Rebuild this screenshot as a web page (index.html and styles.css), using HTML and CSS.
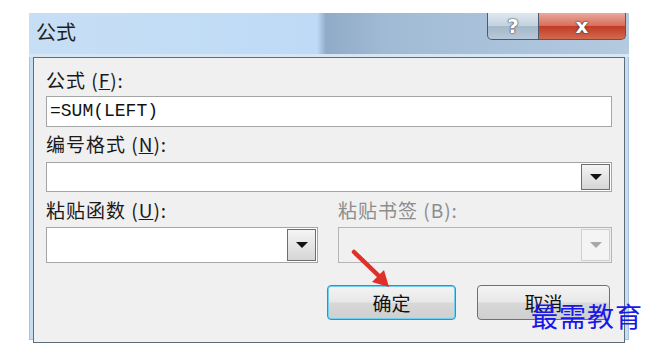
FILE: index.html
```html
<!DOCTYPE html>
<html lang="zh-CN">
<head>
    <meta charset="UTF-8">
    <title>公式</title>
    <link rel="stylesheet" href="styles.css">
</head>
<body>

    <div class="dialog">
        <div class="title-bar">
            <span class="title">公式</span>
            <div class="caption-buttons">
                <button class="btn-help">?</button>
                <button class="btn-close">x</button>
            </div>
        </div>

        <div class="panel">
            <label class="field-label">公式 (<u>F</u>):</label>
            <div class="text-box">=SUM(LEFT)</div>

            <label class="field-label">编号格式 (<u>N</u>):</label>
            <div class="combo">
                <div class="combo-value"></div>
                <div class="combo-arrow"><span class="tri"></span></div>
            </div>

            <div class="paste-row">
                <div class="paste-col">
                    <label class="field-label">粘贴函数 (<u>U</u>):</label>
                    <div class="combo tall">
                        <div class="combo-value"></div>
                        <div class="combo-arrow"><span class="tri"></span></div>
                    </div>
                </div>
                <div class="paste-col">
                    <label class="field-label disabled">粘贴书签 (B):</label>
                    <div class="combo tall off">
                        <div class="combo-value"></div>
                        <div class="combo-arrow"><span class="tri"></span></div>
                    </div>
                </div>
            </div>

            <div class="actions">
                <button class="btn btn-ok">确定</button>
                <button class="btn">取消</button>
            </div>
        </div>

        <svg class="arrow" width="50" height="44" viewBox="0 0 50 44">
            <path d="M3 3 L29 28" stroke="#e0302a" stroke-width="4.5" stroke-linecap="round" fill="none"/>
            <path d="M38 38 L21 33 L33 21 Z" fill="#e0302a"/>
        </svg>
    </div>

    <div class="watermark">最需教育</div>

</body>
</html>
```

FILE: styles.css
```css
body {
    margin: 0;
    background: #fff;
    font-family: "Noto Sans CJK SC", sans-serif;
    width: 654px;
    height: 350px;
    overflow: hidden;
    position: relative;
}
.dialog {
    position: relative;
    margin: 13px 0 0 29px;
    width: 600px;
    height: 327px;
    background: #c8ddf1;
    box-shadow: inset 0 0 0 1px #a9c3dc;
}
.title-bar {
    height: 44px;
    display: flex;
    justify-content: space-between;
    background: linear-gradient(to right, #c7dff5 0%, #bedaf6 48%, #90abc8 49.5%, #a2bbd5 60%, #b3cae0 100%);
    box-shadow: inset 0 -3px 0 #d6e6f4;
}
.title {
    font-size: 20px;
    color: #1e1e1e;
    padding: 7px 0 0 7px;
    line-height: 24px;
}
.caption-buttons {
    display: flex;
    margin-right: 3px;
    height: 27px;
}
.caption-buttons button {
    margin: 0;
    padding: 0;
    border: 1px solid #4d5c6c;
    border-top: none;
    font-family: "DejaVu Sans", sans-serif;
    font-weight: bold;
    font-size: 20px;
    line-height: 22px;
    color: #fff;
    text-shadow: 0 0 2px #333, 0 0 1px #333;
}
.btn-help {
    width: 52px;
    border-radius: 0 0 0 5px;
    background: linear-gradient(#dfe8f0, #c3d2df 50%, #a6b9ca 52%, #b7c9d8);
}
.btn-close {
    width: 87px;
    border-left: none !important;
    border-radius: 0 0 5px 0;
    background: linear-gradient(#e9a99b, #d8705c 48%, #c33b27 52%, #d26a4e);
}
.panel {
    margin: 0 4px;
    height: 277px;
    border: 1px solid #5e6d7c;
    background: #f0f0f0;
    padding: 7px 12px 0 12px;
}
.field-label {
    display: block;
    font-size: 19px;
    line-height: 30px;
    height: 30px;
    color: #1a1a1a;
    margin-top: 2px;
    letter-spacing: 1px;
    white-space: pre;
}
.field-label:first-child {
    margin-top: 0;
}
.field-label.disabled {
    color: #8d8d8d;
}
.text-box {
    margin-top: 1px;
    height: 29px;
    border: 1px solid #a5a5a5;
    background: #fff;
    font-family: "Liberation Mono", monospace;
    font-size: 18px;
    line-height: 29px;
    padding-left: 3px;
    color: #111;
}
.combo {
    display: flex;
    margin-top: 3px;
    height: 30px;
    border: 1px solid #a5a5a5;
    background: #fff;
    box-sizing: border-box;
}
.combo.tall {
    height: 36px;
    margin-top: 2px;
}
.combo-value {
    flex: 1;
}
.combo-arrow {
    width: 27px;
    margin: 1px;
    border: 1px solid #6e6e6e;
    background: linear-gradient(#f4f4f4, #d6d6d6);
    display: flex;
    align-items: center;
    justify-content: center;
}
.tri {
    width: 0;
    height: 0;
    border-left: 6px solid transparent;
    border-right: 6px solid transparent;
    border-top: 6px solid #111;
}
.combo.off {
    background: #f0f0f0;
    border-color: #b5b5b5;
}
.combo.off .combo-arrow {
    border-color: #d0d0d0;
    background: #f4f4f4;
}
.combo.off .tri {
    border-top-color: #a8a8a8;
}
.paste-row {
    display: grid;
    grid-template-columns: 272px 274px;
    gap: 20px;
    margin-top: 3px;
}
.actions {
    display: flex;
    justify-content: flex-end;
    gap: 21px;
    margin-top: 22px;
    padding-right: 2px;
}
.btn {
    margin: 0;
    width: 133px;
    height: 35px;
    border: 1px solid #707070;
    border-radius: 4px;
    background: linear-gradient(#f4f4f4, #e8e8e8 48%, #d8d8d8 52%, #cfcfcf);
    font-family: "Noto Sans CJK SC", sans-serif;
    font-size: 19px;
    color: #111;
    padding: 0;
}
.btn-ok {
    width: 129px;
    border-color: #3c8fb8;
    box-shadow: inset 0 0 0 1px #6fd0f0;
}
.arrow {
    position: absolute;
    left: 322px;
    top: 236px;
}
.watermark {
    position: absolute;
    left: 531px;
    top: 298px;
    font-family: "Noto Sans CJK SC", serif;
    font-size: 27px;
    line-height: 36px;
    color: #1818e8;
    letter-spacing: 1px;
}
```
